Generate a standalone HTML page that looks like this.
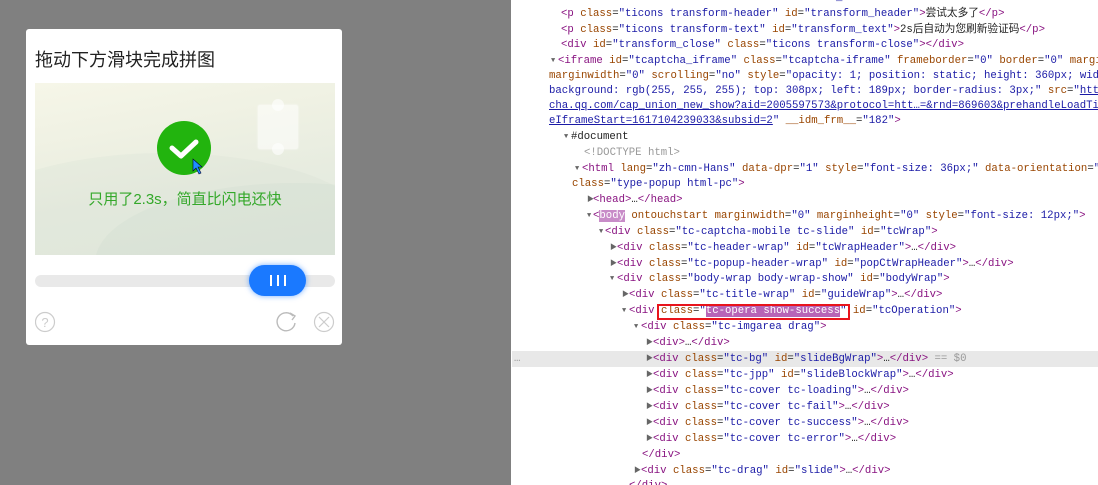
<!DOCTYPE html>
<html><head><meta charset="utf-8"><style>
*{margin:0;padding:0;box-sizing:border-box}
body{width:1098px;height:485px;overflow:hidden;background:#fff;position:relative;font-family:"Liberation Sans","Noto Sans CJK SC",sans-serif}
#left{position:absolute;left:0;top:0;width:511px;height:485px;background:#808080}
#card{position:absolute;left:26px;top:29px;width:316px;height:316px;background:#fff;border-radius:3px}
#title{position:absolute;left:9px;top:17px;font-size:18px;color:#222}
#img{position:absolute;left:9px;top:54px;width:300px;height:172px;background:linear-gradient(170deg,#f6f6e8 0%,#eff1e3 30%,#e7ece0 60%,#e2e8de 100%);overflow:hidden}
.hill{position:absolute;border-radius:50%}
#circle{position:absolute;left:122px;top:38px;width:54px;height:54px;border-radius:50%;background:#22b40e}
#msg{position:absolute;left:0;width:300px;top:105px;text-align:center;color:#34a82a;font-size:15px}
#piece{position:absolute;left:223px;top:22px;width:40px;height:44px;background:rgba(255,255,255,.55);border-radius:2px;box-shadow:0 0 2px rgba(255,255,255,.8)}
.bump{position:absolute;width:12px;height:12px;border-radius:50%;background:rgba(255,255,255,.6)}
#track{position:absolute;left:9px;top:246px;width:300px;height:12px;border-radius:6px;background:#e9e9e9}
#handle{position:absolute;left:223px;top:236px;width:57px;height:31px;border-radius:16px;background:#1a79ff;box-shadow:0 0 6px rgba(26,121,255,.6)}
#handle i{position:absolute;top:10px;width:2px;height:11px;background:#fff}
#dt{position:absolute;left:512px;top:0;width:586px;height:485px;font-family:"Liberation Mono","Noto Sans CJK SC",monospace;font-size:10.67px;white-space:pre;color:#222;overflow:hidden}
.l{position:absolute;height:16px;line-height:16px}
.t{color:#881280}.a{color:#994500}.v{color:#1a1aa6}.g{color:#999}.u{color:#1a1aa6;text-decoration:underline}
.tr{position:absolute;font-size:7px;color:#666;line-height:16px}
</style></head><body>
<div id="left">
<div id="card">
<div id="title">拖动下方滑块完成拼图</div>
<div id="img">
<div class="hill" style="left:-80px;top:70px;width:420px;height:160px;background:rgba(200,215,200,.15)"></div>
<div class="hill" style="left:60px;top:100px;width:400px;height:160px;background:rgba(190,205,195,.15)"></div>
<div id="piece"></div>
<div class="bump" style="left:237px;top:16px"></div>
<div class="bump" style="left:237px;top:60px"></div>
<div id="circle"><svg width="54" height="54"><path d="M15 27 L24 35 L39 21" stroke="#fff" stroke-width="5" fill="none" stroke-linecap="round" stroke-linejoin="round"/><path d="M36 38 L36 50 L39 47 L42 53 L44 52 L41 46 L45 46 Z" fill="#1f8fff" stroke="#003" stroke-width=".6"/></svg></div>
<div id="msg">只用了2.3s，简直比闪电还快</div>
</div>
<div id="track"></div>
<div id="handle"><i style="left:21px"></i><i style="left:28px"></i><i style="left:35px"></i></div>
<svg style="position:absolute;left:9px;top:282px" width="300" height="24">
<circle cx="10" cy="11" r="9.5" fill="none" stroke="#ccc" stroke-width="1.2"/>
<text x="10" y="16" font-size="13" text-anchor="middle" fill="#ccc" font-family="Liberation Sans">?</text>
<path d="M258 5 A9 9 0 1 0 260 12" fill="none" stroke="#bbb" stroke-width="1.4"/><path d="M255 2 L260 5 L257 9" fill="none" stroke="#bbb" stroke-width="1.4"/>
<circle cx="289" cy="11" r="9.5" fill="none" stroke="#ccc" stroke-width="1.2"/>
<path d="M284 6 L294 16 M294 6 L284 16" stroke="#ccc" stroke-width="1.2"/>
</svg>
</div>
</div>
<div id="dt">
<div class="l" style="top:-10px;left:49px"><span class="t">&lt;div</span> <span class="a">class</span>=<span class="v">"ticons ticon-refresh"</span> <span class="a">id</span>=<span class="v">"ticon_refresh"</span><span class="t">&gt;&lt;/div&gt;</span></div>
<div class="l" style="top:6px;left:49px"><span class="t">&lt;p</span> <span class="a">class</span>=<span class="v">"ticons transform-header"</span> <span class="a">id</span>=<span class="v">"transform_header"</span><span class="t">&gt;</span>尝试太多了<span class="t">&lt;/p&gt;</span></div>
<div class="l" style="top:22px;left:49px"><span class="t">&lt;p</span> <span class="a">class</span>=<span class="v">"ticons transform-text"</span> <span class="a">id</span>=<span class="v">"transform_text"</span><span class="t">&gt;</span>2s后自动为您刷新验证码<span class="t">&lt;/p&gt;</span></div>
<div class="l" style="top:37px;left:49px"><span class="t">&lt;div</span> <span class="a">id</span>=<span class="v">"transform_close"</span> <span class="a">class</span>=<span class="v">"ticons transform-close"</span><span class="t">&gt;&lt;/div&gt;</span></div>
<div class="tr" style="top:53px;left:39px">▼</div>
<div class="l" style="top:53px;left:46px"><span class="t">&lt;iframe</span> <span class="a">id</span>=<span class="v">"tcaptcha_iframe"</span> <span class="a">class</span>=<span class="v">"tcaptcha-iframe"</span> <span class="a">frameborder</span>=<span class="v">"0"</span> <span class="a">border</span>=<span class="v">"0"</span> <span class="a">margi</span></div>
<div class="l" style="top:68px;left:37px"><span class="a">marginwidth</span>=<span class="v">"0"</span> <span class="a">scrolling</span>=<span class="v">"no"</span> <span class="a">style</span>=<span class="v">"opacity: 1; position: static; height: 360px; wid</span></div>
<div class="l" style="top:83px;left:37px"><span class="v">background: rgb(255, 255, 255); top: 308px; left: 189px; border-radius: 3px;"</span> <span class="a">src</span>=<span class="v">"<span class="u">htt</span></span></div>
<div class="l" style="top:98px;left:37px"><span class="u">cha.qq.com/cap_union_new_show?aid=2005597573&amp;protocol=htt…=&amp;rnd=869603&amp;prehandleLoadTi</span></div>
<div class="l" style="top:113px;left:37px"><span class="u">eIframeStart=1617104239033&amp;subsid=2</span><span class="v">"</span> <span class="a">__idm_frm__</span>=<span class="v">"182"</span><span class="t">&gt;</span></div>
<div class="tr" style="top:129px;left:52px">▼</div>
<div class="l" style="top:129px;left:59px">#document</div>
<div class="l g" style="top:145px;left:72px">&lt;!DOCTYPE html&gt;</div>
<div class="tr" style="top:161px;left:63px">▼</div>
<div class="l" style="top:161px;left:70px"><span class="t">&lt;html</span> <span class="a">lang</span>=<span class="v">"zh-cmn-Hans"</span> <span class="a">data-dpr</span>=<span class="v">"1"</span> <span class="a">style</span>=<span class="v">"font-size: 36px;"</span> <span class="a">data-orientation</span>=<span class="v">"</span></div>
<div class="l" style="top:176px;left:60px"><span class="a">class</span>=<span class="v">"type-popup html-pc"</span><span class="t">&gt;</span></div>
<div class="tr" style="top:192px;left:75px">▶</div>
<div class="l" style="top:192px;left:81px"><span class="t">&lt;head&gt;</span>…<span class="t">&lt;/head&gt;</span></div>
<div class="tr" style="top:208px;left:75px">▼</div>
<div class="l" style="top:208px;left:81px"><span class="t">&lt;<span style="background:#c88cc8;color:#fff">body</span></span> <span class="a">ontouchstart</span> <span class="a">marginwidth</span>=<span class="v">"0"</span> <span class="a">marginheight</span>=<span class="v">"0"</span> <span class="a">style</span>=<span class="v">"font-size: 12px;"</span><span class="t">&gt;</span></div>
<div class="tr" style="top:224px;left:87px">▼</div>
<div class="l" style="top:224px;left:93px"><span class="t">&lt;div</span> <span class="a">class</span>=<span class="v">"tc-captcha-mobile tc-slide"</span> <span class="a">id</span>=<span class="v">"tcWrap"</span><span class="t">&gt;</span></div>
<div class="tr" style="top:240px;left:98px">▶</div>
<div class="l" style="top:240px;left:105px"><span class="t">&lt;div</span> <span class="a">class</span>=<span class="v">"tc-header-wrap"</span> <span class="a">id</span>=<span class="v">"tcWrapHeader"</span><span class="t">&gt;</span>…<span class="t">&lt;/div&gt;</span></div>
<div class="tr" style="top:256px;left:98px">▶</div>
<div class="l" style="top:256px;left:105px"><span class="t">&lt;div</span> <span class="a">class</span>=<span class="v">"tc-popup-header-wrap"</span> <span class="a">id</span>=<span class="v">"popCtWrapHeader"</span><span class="t">&gt;</span>…<span class="t">&lt;/div&gt;</span></div>
<div class="tr" style="top:271px;left:98px">▼</div>
<div class="l" style="top:271px;left:105px"><span class="t">&lt;div</span> <span class="a">class</span>=<span class="v">"body-wrap body-wrap-show"</span> <span class="a">id</span>=<span class="v">"bodyWrap"</span><span class="t">&gt;</span></div>
<div class="tr" style="top:287px;left:110px">▶</div>
<div class="l" style="top:287px;left:117px"><span class="t">&lt;div</span> <span class="a">class</span>=<span class="v">"tc-title-wrap"</span> <span class="a">id</span>=<span class="v">"guideWrap"</span><span class="t">&gt;</span>…<span class="t">&lt;/div&gt;</span></div>
<div class="tr" style="top:303px;left:110px">▼</div>
<div class="l" style="top:303px;left:117px"><span class="t">&lt;div</span> <span class="a">class</span>=<span class="v">"<span style="background:#b764b7;color:#fff">tc-opera show-success</span>"</span> <span class="a">id</span>=<span class="v">"tcOperation"</span><span class="t">&gt;</span></div>
<div style="position:absolute;left:145px;top:304px;width:193px;height:16px;border:2px solid #e8141c"></div>
<div class="tr" style="top:319px;left:122px">▼</div>
<div class="l" style="top:319px;left:129px"><span class="t">&lt;div</span> <span class="a">class</span>=<span class="v">"tc-imgarea drag"</span><span class="t">&gt;</span></div>
<div class="tr" style="top:335px;left:134px">▶</div>
<div class="l" style="top:335px;left:141px"><span class="t">&lt;div&gt;</span>…<span class="t">&lt;/div&gt;</span></div>
<div style="position:absolute;left:0;top:351px;width:586px;height:16px;background:#e8e8e8"></div>
<div class="l g" style="top:351px;left:2px">…</div>
<div class="tr" style="top:351px;left:134px">▶</div>
<div class="l" style="top:351px;left:141px"><span class="t">&lt;div</span> <span class="a">class</span>=<span class="v">"tc-bg"</span> <span class="a">id</span>=<span class="v">"slideBgWrap"</span><span class="t">&gt;</span>…<span class="t">&lt;/div&gt;</span> <span class="g">== $0</span></div>
<div class="tr" style="top:367px;left:134px">▶</div>
<div class="l" style="top:367px;left:141px"><span class="t">&lt;div</span> <span class="a">class</span>=<span class="v">"tc-jpp"</span> <span class="a">id</span>=<span class="v">"slideBlockWrap"</span><span class="t">&gt;</span>…<span class="t">&lt;/div&gt;</span></div>
<div class="tr" style="top:383px;left:134px">▶</div>
<div class="l" style="top:383px;left:141px"><span class="t">&lt;div</span> <span class="a">class</span>=<span class="v">"tc-cover tc-loading"</span><span class="t">&gt;</span>…<span class="t">&lt;/div&gt;</span></div>
<div class="tr" style="top:399px;left:134px">▶</div>
<div class="l" style="top:399px;left:141px"><span class="t">&lt;div</span> <span class="a">class</span>=<span class="v">"tc-cover tc-fail"</span><span class="t">&gt;</span>…<span class="t">&lt;/div&gt;</span></div>
<div class="tr" style="top:415px;left:134px">▶</div>
<div class="l" style="top:415px;left:141px"><span class="t">&lt;div</span> <span class="a">class</span>=<span class="v">"tc-cover tc-success"</span><span class="t">&gt;</span>…<span class="t">&lt;/div&gt;</span></div>
<div class="tr" style="top:431px;left:134px">▶</div>
<div class="l" style="top:431px;left:141px"><span class="t">&lt;div</span> <span class="a">class</span>=<span class="v">"tc-cover tc-error"</span><span class="t">&gt;</span>…<span class="t">&lt;/div&gt;</span></div>
<div class="l" style="top:447px;left:130px"><span class="t">&lt;/div&gt;</span></div>
<div class="tr" style="top:463px;left:122px">▶</div>
<div class="l" style="top:463px;left:129px"><span class="t">&lt;div</span> <span class="a">class</span>=<span class="v">"tc-drag"</span> <span class="a">id</span>=<span class="v">"slide"</span><span class="t">&gt;</span>…<span class="t">&lt;/div&gt;</span></div>
<div class="l" style="top:478px;left:117px"><span class="t">&lt;/div&gt;</span></div>
</div>
</body></html>
